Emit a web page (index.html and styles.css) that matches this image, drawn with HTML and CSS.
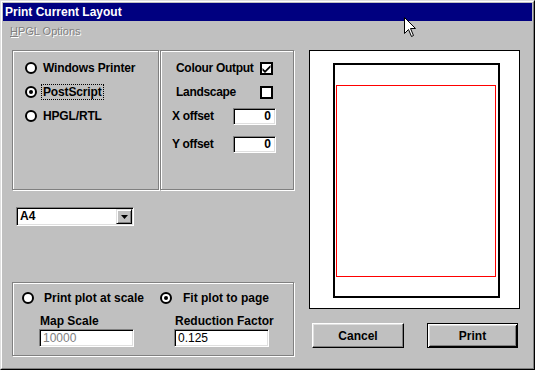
FILE: index.html
```html
<!DOCTYPE html>
<html>
<head>
<meta charset="utf-8">
<link rel="stylesheet" href="styles.css">
</head>
<body>
<div class="window">
  <div class="frame">
    <div class="titlebar">Print Current Layout</div>
    <div class="menubar"><span class="menu-item"><u>H</u>PGL Options</span></div>
    <div class="content">
      <div class="left-col">
        <div class="top-row">
          <div class="group group-output">
            <div class="radio-row"><span class="radio"></span><span class="label">Windows Printer</span></div>
            <div class="radio-row"><span class="radio checked"></span><span class="label focus">PostScript</span></div>
            <div class="radio-row"><span class="radio"></span><span class="label">HPGL/RTL</span></div>
          </div>
          <div class="group group-options">
            <div class="opt-row"><span class="label lab-a">Colour Output</span><span class="checkbox"><svg width="9" height="9" viewBox="0 0 9 9"><path d="M0.5 4 L3 6.5 L8.5 1 L8.5 3.5 L3 9 L0.5 6.5 Z" fill="#000"/></svg></span></div>
            <div class="opt-row"><span class="label lab-a">Landscape</span><span class="checkbox"></span></div>
            <div class="opt-row"><span class="label lab-b">X offset</span><span class="field num">0</span></div>
            <div class="opt-row row-gap"><span class="label lab-b">Y offset</span><span class="field num">0</span></div>
          </div>
        </div>
        <div class="select">
          <span class="select-value">A4</span>
          <span class="select-btn"><svg width="7" height="4" viewBox="0 0 7 4"><path d="M0 0 H7 L3.5 4 Z" fill="#000"/></svg></span>
        </div>
        <div class="group group-scale">
          <div class="scale-col">
            <div class="radio-row wide"><span class="radio"></span><span class="label">Print plot at scale</span></div>
            <div class="sub-label lab-map">Map Scale</div>
            <div class="field text disabled in-map">10000</div>
          </div>
          <div class="scale-col">
            <div class="radio-row wide2"><span class="radio checked"></span><span class="label">Fit plot to page</span></div>
            <div class="sub-label lab-red">Reduction Factor</div>
            <div class="field text in-red">0.125</div>
          </div>
        </div>
      </div>
      <div class="right-col">
        <div class="preview">
          <div class="page"><div class="plot"></div></div>
        </div>
        <div class="buttons">
          <button class="btn btn-cancel">Cancel</button>
          <button class="btn btn-default">Print</button>
        </div>
      </div>
    </div>
  </div>
  <svg class="cursor" width="13" height="21" viewBox="0 0 13 21"><path d="M0.5 0.5 L0.5 16.5 L4.5 12.5 L7.5 19.5 L9.5 18.5 L6.5 11.5 L11.5 11.5 Z" fill="#fff" stroke="#000" stroke-width="1"/></svg>
</div>
</body>
</html>
```

FILE: styles.css
```css
html, body {
  margin: 0;
  padding: 0;
  background: #c0c0c0;
}
body {
  font-family: "Liberation Sans", Arial, sans-serif;
  font-size: 12px;
  color: #000;
}
.window {
  position: relative;
  width: 535px;
  height: 370px;
  box-sizing: border-box;
  border: 1px solid;
  border-color: #dfdfdf #000 #000 #dfdfdf;
  background: #c0c0c0;
}
.frame {
  height: 100%;
  box-sizing: border-box;
  border: 1px solid;
  border-color: #fff #808080 #808080 #fff;
  padding: 1px;
}
.titlebar {
  height: 18px;
  line-height: 18px;
  background: #000080;
  color: #fff;
  font-weight: bold;
  font-size: 12px;
  padding-left: 2px;
}
.menubar {
  height: 20px;
  line-height: 20px;
  padding-left: 7px;
  font-size: 11px;
  color: #808080;
  text-shadow: 1px 1px 0 #fff;
}
.menu-item u { text-decoration: underline; }
.content {
  display: flex;
  padding: 9px 0 0 9px;
}
.left-col {
  width: 283px;
  display: flex;
  flex-direction: column;
}
.top-row {
  display: flex;
  height: 140px;
}
.group {
  box-sizing: border-box;
  border: 1px solid #808080;
  box-shadow: 1px 1px 0 #fff, inset 1px 1px 0 #fff;
}
.label {
  font-weight: bold;
  white-space: nowrap;
}
.group-output {
  width: 147px;
  height: 140px;
  padding: 5px 0 0 12px;
}
.group-output .label {
  letter-spacing: -0.15px;
}
.radio-row {
  display: flex;
  align-items: center;
  height: 24px;
  gap: 6px;
}
.radio {
  position: relative;
  width: 12px;
  height: 12px;
  box-sizing: border-box;
  border-radius: 50%;
  border: 2px solid #000;
  background: #fff;
  flex: none;
}
.radio.checked::after {
  content: "";
  position: absolute;
  left: 2px;
  top: 2px;
  width: 4px;
  height: 4px;
  border-radius: 50%;
  background: #000;
}
.focus {
  line-height: 14px;
  outline: 1px dotted #000;
  padding: 0 1px;
  margin-left: -1px;
}
.group-options {
  width: 134px;
  height: 140px;
  margin-left: 1px;
  padding-top: 5px;
}
.group-options .label {
  letter-spacing: -0.3px;
}
.opt-row {
  display: flex;
  align-items: center;
  height: 24px;
}
.row-gap { margin-top: 4px; }
.lab-a { margin-left: 15px; }
.lab-b { margin-left: 11px; }
.checkbox {
  margin-left: auto;
  margin-right: 20px;
  width: 13px;
  height: 13px;
  box-sizing: border-box;
  border: 2px solid #000;
  background: #fff;
  display: flex;
  align-items: center;
  justify-content: center;
  flex: none;
}
.field {
  box-sizing: border-box;
  background: #fff;
  border: 1px solid;
  border-color: #808080 #fff #fff #808080;
  box-shadow: inset 1px 1px 0 #000, inset -1px -1px 0 #dfdfdf;
  font-weight: bold;
  white-space: nowrap;
}
.field.num {
  margin-left: auto;
  margin-right: 17px;
  width: 43px;
  height: 17px;
  line-height: 15px;
  text-align: right;
  padding-right: 4px;
  flex: none;
}
.select {
  display: flex;
  box-sizing: border-box;
  width: 118px;
  height: 19px;
  margin: 17px 0 0 4px;
  border: 1px solid;
  border-color: #808080 #fff #fff #808080;
  box-shadow: inset 1px 1px 0 #000, inset -1px -1px 0 #dfdfdf;
  background: #fff;
  padding: 1px;
}
.select-value {
  flex: 1;
  font-weight: bold;
  line-height: 15px;
  padding-left: 2px;
}
.select-btn {
  width: 16px;
  height: 15px;
  box-sizing: border-box;
  background: #c0c0c0;
  border: 1px solid;
  border-color: #dfdfdf #000 #000 #dfdfdf;
  box-shadow: inset 1px 1px 0 #fff, inset -1px -1px 0 #808080;
  display: flex;
  align-items: center;
  justify-content: center;
}
.group-scale {
  margin-top: 56px;
  width: 282px;
  height: 74px;
  padding: 5px 0 0 9px;
  display: grid;
  grid-template-columns: 138px 1fr;
}
.scale-col {
  display: flex;
  flex-direction: column;
}
.radio-row.wide { height: 20px; gap: 10px; }
.radio-row.wide2 { height: 20px; gap: 11px; }
.sub-label {
  font-weight: bold;
  line-height: 14px;
  padding: 6px 0 1px;
}
.lab-map { margin-left: 18px; }
.lab-red { margin-left: 15px; }
.field.text {
  width: 95px;
  height: 18px;
  line-height: 17px;
  padding-left: 3px;
  font-weight: normal;
}
.field.disabled { color: #808080; }
.in-map { margin-left: 17px; }
.in-red { margin-left: 14px; }
.right-col {
  margin-left: 14px;
  display: flex;
  flex-direction: column;
}
.preview {
  width: 211px;
  height: 259px;
  box-sizing: border-box;
  border: 1px solid #000;
  background: #fff;
  padding: 12px 0 0 23px;
}
.page {
  width: 167px;
  height: 235px;
  box-sizing: border-box;
  border: 2px solid #000;
  padding: 20px 0 0 1px;
}
.plot {
  width: 160px;
  height: 192px;
  box-sizing: border-box;
  border: 1px solid #f00;
}
.buttons {
  display: flex;
  margin-top: 14px;
  padding-left: 3px;
  gap: 23px;
}
.btn {
  box-sizing: border-box;
  height: 25px;
  padding: 0;
  margin: 0;
  background: #c0c0c0;
  font-family: "Liberation Sans", Arial, sans-serif;
  font-size: 12px;
  font-weight: bold;
  color: #000;
  border: 1px solid;
  border-color: #fff #000 #000 #fff;
  box-shadow: inset -1px -1px 0 #808080, inset 1px 1px 0 #dfdfdf;
}
.btn-cancel { width: 92px; }
.btn-default {
  width: 91px;
  border: 1px solid #000;
  box-shadow: inset 1px 1px 0 #fff, inset -1px -1px 0 #000, inset 2px 2px 0 #dfdfdf, inset -2px -2px 0 #808080;
}
.cursor {
  position: absolute;
  left: 403px;
  top: 16px;
}
```
